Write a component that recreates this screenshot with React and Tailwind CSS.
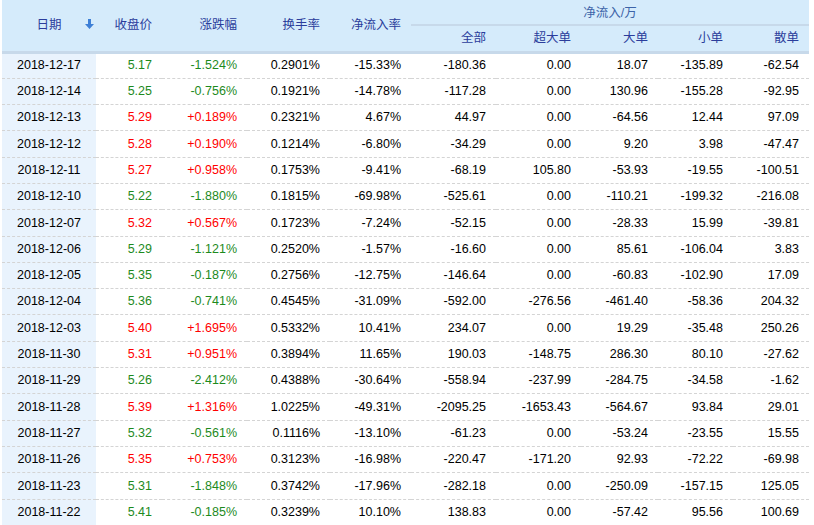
import React from 'react';

const rows = [
  ['2018-12-17','5.17','-1.524%','0.2901%','-15.33%','-180.36','0.00','18.07','-135.89','-62.54'],
  ['2018-12-14','5.25','-0.756%','0.1921%','-14.78%','-117.28','0.00','130.96','-155.28','-92.95'],
  ['2018-12-13','5.29','+0.189%','0.2321%','4.67%','44.97','0.00','-64.56','12.44','97.09'],
  ['2018-12-12','5.28','+0.190%','0.1214%','-6.80%','-34.29','0.00','9.20','3.98','-47.47'],
  ['2018-12-11','5.27','+0.958%','0.1753%','-9.41%','-68.19','105.80','-53.93','-19.55','-100.51'],
  ['2018-12-10','5.22','-1.880%','0.1815%','-69.98%','-525.61','0.00','-110.21','-199.32','-216.08'],
  ['2018-12-07','5.32','+0.567%','0.1723%','-7.24%','-52.15','0.00','-28.33','15.99','-39.81'],
  ['2018-12-06','5.29','-1.121%','0.2520%','-1.57%','-16.60','0.00','85.61','-106.04','3.83'],
  ['2018-12-05','5.35','-0.187%','0.2756%','-12.75%','-146.64','0.00','-60.83','-102.90','17.09'],
  ['2018-12-04','5.36','-0.741%','0.4545%','-31.09%','-592.00','-276.56','-461.40','-58.36','204.32'],
  ['2018-12-03','5.40','+1.695%','0.5332%','10.41%','234.07','0.00','19.29','-35.48','250.26'],
  ['2018-11-30','5.31','+0.951%','0.3894%','11.65%','190.03','-148.75','286.30','80.10','-27.62'],
  ['2018-11-29','5.26','-2.412%','0.4388%','-30.64%','-558.94','-237.99','-284.75','-34.58','-1.62'],
  ['2018-11-28','5.39','+1.316%','1.0225%','-49.31%','-2095.25','-1653.43','-564.67','93.84','29.01'],
  ['2018-11-27','5.32','-0.561%','0.1116%','-13.10%','-61.23','0.00','-53.24','-23.55','15.55'],
  ['2018-11-26','5.35','+0.753%','0.3123%','-16.98%','-220.47','-171.20','92.93','-72.22','-69.98'],
  ['2018-11-23','5.31','-1.848%','0.3742%','-17.96%','-282.18','0.00','-250.09','-157.15','125.05'],
  ['2018-11-22','5.41','-0.185%','0.3239%','10.10%','138.83','0.00','-57.42','95.56','100.69'],
];

const widths = ['w-[94px]','w-[66px]','w-[85px]','w-[83px]','w-[81px]','w-[85px]','w-[85px]','w-[77px]','w-[75px]','w-[76px]'];

export default function App() {
  return (
    <div className="w-[814px] h-[525px] overflow-hidden bg-white pl-[2px]" style={{ fontFamily: '"Liberation Sans", "Noto Sans CJK SC", sans-serif' }}>
      <table className="border-collapse text-[12.5px] text-black">
        <thead className="bg-[#d5ebfb] text-[#2b3d9c]">
          <tr className="h-[25px]">
            <th rowSpan={2} className="w-[94px] font-normal border-b-[3px] border-[#c7d9ea]">
              <div className="relative flex justify-center">
                日期
                <svg className="absolute right-[2px] top-[3px]" width="9" height="10" viewBox="0 0 9 10"><path d="M3 0h3v5h3L4.5 10 0 5h3z" fill="#3d7fd6"/></svg>
              </div>
            </th>
            <th rowSpan={2} className="w-[66px] font-normal text-right pr-[10px] border-b-[3px] border-[#c7d9ea]">收盘价</th>
            <th rowSpan={2} className="w-[85px] font-normal text-right pr-[10px] border-b-[3px] border-[#c7d9ea]">涨跌幅</th>
            <th rowSpan={2} className="w-[83px] font-normal text-right pr-[10px] border-b-[3px] border-[#c7d9ea]">换手率</th>
            <th rowSpan={2} className="w-[81px] font-normal text-right pr-[10px] border-b-[3px] border-[#c7d9ea]">净流入率</th>
            <th colSpan={5} className="font-normal text-center pt-[2px] text-[#3c63a8] border-b-2 border-[#c7d9ea]">净流入/万</th>
          </tr>
          <tr className="h-[27px]">
            {['全部','超大单','大单','小单','散单'].map((h, i) => (
              <th key={h} className={`${widths[i + 5]} font-normal text-right pr-[10px] border-b-[3px] border-[#c7d9ea]`}>{h}</th>
            ))}
          </tr>
        </thead>
        <tbody>
          {rows.map((r) => {
            const up = r[2].startsWith('+');
            const c = up ? 'text-[#f00]' : 'text-[#1d8a1d]';
            return (
              <tr key={r[0]} className="h-[26.3px] border-b border-dashed border-[#d4d4d4]">
                <td className="bg-[#e9f3fd] text-center">{r[0]}</td>
                <td className={`text-right pr-[10px] ${c}`}>{r[1]}</td>
                <td className={`text-right pr-[10px] ${c}`}>{r[2]}</td>
                {r.slice(3).map((v, i) => (
                  <td key={i} className="text-right pr-[10px]">{v}</td>
                ))}
              </tr>
            );
          })}
        </tbody>
      </table>
    </div>
  );
}
